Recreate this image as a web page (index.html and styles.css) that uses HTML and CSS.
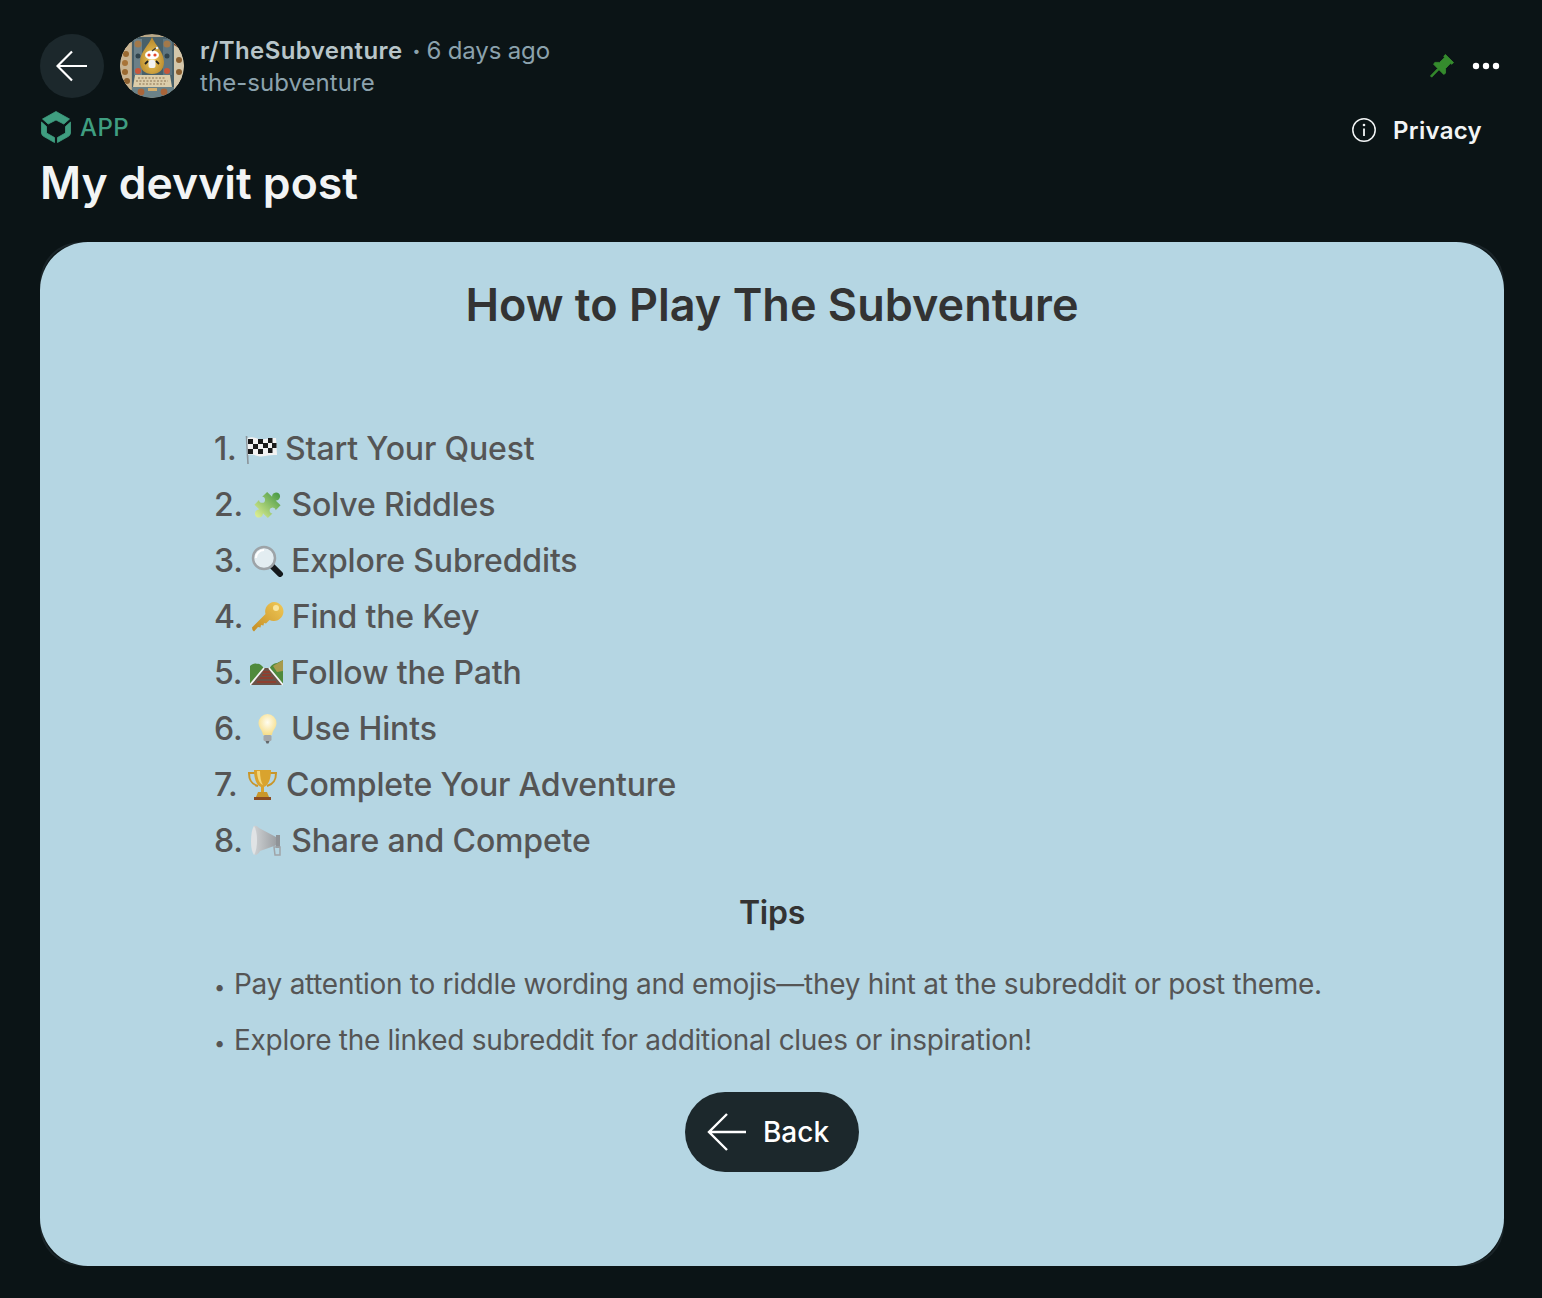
FILE: index.html
```html
<!DOCTYPE html>
<html lang="en">
<head>
<meta charset="utf-8">
<title>My devvit post</title>
<link rel="stylesheet" href="styles.css">
</head>
<body>
<main class="page">
  <header class="top">
    <div class="who">
      <button class="round-back" aria-label="Go back">
        <svg class="arrow" viewBox="0 0 32 32" width="32" height="32"><path d="M31 16H2M16 1.500 1.500 16 16 30.500" fill="none" stroke="#fff" stroke-width="2.200"/></svg>
      </button>
      <svg class="avatar" viewBox="0 0 64 64" width="64" height="64" role="img" aria-label="Subreddit avatar">
        <defs>
          <clipPath id="av"><circle cx="32" cy="32" r="32"/></clipPath>
          <radialGradient id="gold" cx=".5" cy=".6" r=".6"><stop offset="0" stop-color="#f0c95a"/><stop offset="1" stop-color="#b3842a"/></radialGradient>
        </defs>
        <g clip-path="url(#av)">
          <rect width="64" height="64" fill="#b9a888"/>
          <rect x="0" y="0" width="11" height="64" fill="#c9b492"/>
          <rect x="54" y="0" width="10" height="64" fill="#d4c7ab"/>
          <circle cx="6" cy="20" r="3" fill="#9a6a32"/><circle cx="5" cy="29" r="3" fill="#a87438"/><circle cx="5" cy="38" r="3" fill="#9a6a32"/><circle cx="7" cy="47" r="3" fill="#8c6030"/>
          <circle cx="59" cy="26" r="3" fill="#8c6030"/><circle cx="59" cy="38" r="3" fill="#8c6030"/>
          <path d="M54 10 64 16" stroke="#7a3f22" stroke-width="2"/>
          <rect x="12" y="3" width="42" height="60" fill="#48606a"/>
          <rect x="14" y="5" width="8" height="36" fill="#6c8088"/><rect x="43" y="5" width="9" height="36" fill="#5f7680"/>
          <circle cx="18" cy="10" r="3.500" fill="#a3794a"/><circle cx="47" cy="10" r="3.500" fill="#a3794a"/>
          <circle cx="18" cy="22" r="2.500" fill="#30434c"/><circle cx="47" cy="22" r="2.500" fill="#30434c"/>
          <circle cx="18" cy="37" r="3" fill="#c8573a"/><circle cx="47" cy="37" r="3" fill="#c8573a"/>
          <path d="M32 3C29 11 20 18 20 28c0 8 5 12 12 12s12-4 12-12C44 18 35 11 32 3Z" fill="url(#gold)"/>
          <ellipse cx="32" cy="21" rx="7" ry="4.500" fill="#fff"/>
          <circle cx="29" cy="21" r="1.600" fill="#e4472a"/><circle cx="35" cy="21" r="1.600" fill="#e4472a"/>
          <rect x="28.500" y="26" width="7" height="8" rx="2" fill="#f3f3f3"/>
          <path d="M28 27l-3 3M36 27l3 3" stroke="#222" stroke-width="1.800"/>
          <path d="M32 17l4-3" stroke="#333" stroke-width="1.200"/><circle cx="37" cy="14" r="1.300" fill="#eee"/>
          <path d="M15 41h35l2 12H13Z" fill="#dccdaa"/>
          <path d="M18 44h28M16 47h32M19 50h26" stroke="#8a7452" stroke-width="1.200" stroke-dasharray="2 1.500"/>
          <rect x="12" y="53" width="42" height="11" fill="#6b8288"/>
          <circle cx="21" cy="58" r="3.400" fill="#a9653a"/><circle cx="44" cy="58" r="3.400" fill="#a9653a"/>
          <rect x="28" y="54" width="9" height="3" fill="#d4ad6a"/>
        </g>
      </svg>
      <div class="names">
        <div class="line-one"><span class="sub">r/TheSubventure</span><span class="dot">•</span><span class="age">6 days ago</span></div>
        <div class="slug">the-subventure</div>
      </div>
    </div>
    <div class="actions">
      <svg class="pin" viewBox="0 0 24 24" width="24" height="24"><path d="M15.400 0.400 23.600 8.600 21.800 10.200 20.300 9.600 15.600 14.400 15.500 19.200 13.700 20.400 9 15.700 1.700 23.200 0.400 21.900 7.700 14.400 3.600 10.300 4.800 8.400 9.600 8.400 14.400 3.700 13.800 2.200Z" fill="#358b2d" stroke="#358b2d" stroke-width=".8" stroke-linejoin="round"/></svg>
      <svg class="dots" viewBox="0 0 28 8" width="28" height="8"><circle cx="4" cy="4" r="3.200" fill="#fff"/><circle cx="14" cy="4" r="3.200" fill="#fff"/><circle cx="24" cy="4" r="3.200" fill="#fff"/></svg>
    </div>
  </header>

  <section class="meta">
    <div class="meta-left">
      <div class="app">
        <svg viewBox="0 0 30 32" width="30" height="32"><path d="M15 .5 28.500 8 22.800 13 15 9 7.200 13 1.500 8Z M.5 11 5.500 15.500V22L13.500 26.500V31.500L2.500 25.300Q.5 24 .5 22Z M29.500 11 24.500 15.500V22L16.500 26.500V31.500L27.500 25.300Q29.500 24 29.500 22Z" fill="#3f9e80" stroke="#3f9e80" stroke-width=".8" stroke-linejoin="round"/></svg>
        <span>APP</span>
      </div>
      <h1>My devvit post</h1>
    </div>
    <div class="privacy">
      <svg viewBox="0 0 24 24" width="24" height="24"><circle cx="12" cy="12" r="11.200" fill="none" stroke="#f2f4f5" stroke-width="1.500"/><path d="M12 10.500V18" stroke="#f2f4f5" stroke-width="1.800"/><circle cx="12" cy="7" r="1.300" fill="#f2f4f5"/></svg>
      <span>Privacy</span>
    </div>
  </section>

  <article class="frame">
    <div class="card">
      <h2>How to Play The Subventure</h2>
      <div class="content">
        <ol class="steps">
          <li>1. <svg class="emoji" viewBox="0 0 33 32"><path d="M1.500 3 3 31" stroke="#8b949a" stroke-width="1.600"/><path d="M2.500 5C9 2 13 8 20 6c4-1 8-1 11-1l1 17c-4 0-8 0-12 1-7 2-11-3-17-1Z" fill="#f2f2f2"/><g fill="#1b1b1b"><rect x="3" y="6" width="5" height="5"/><rect x="13" y="6" width="5" height="5"/><rect x="23" y="5" width="4.500" height="5"/><rect x="8" y="11" width="5" height="5"/><rect x="18" y="10" width="5" height="5"/><rect x="27" y="10" width="4.500" height="5"/><rect x="3" y="16" width="5" height="5"/><rect x="13" y="16" width="5" height="5"/><rect x="23" y="15" width="4.500" height="5"/></g></svg> Start Your Quest</li>
          <li>2. <svg class="emoji" viewBox="0 0 33 32"><defs><linearGradient id="pz" x1=".5" y1="0" x2=".5" y2="1"><stop offset="0" stop-color="#4a9a46"/><stop offset="1" stop-color="#dcee92"/></linearGradient></defs><path transform="translate(16.500 16) rotate(45) translate(-16.500 -17)" d="M7 8H14a4 4 0 1 1 5 0H26V15a3 3 0 1 0 0 4.500V26H19a4 4 0 1 1-5 0H7V19.500a3 3 0 1 0 0-4.500Z" fill="url(#pz)"/></svg> Solve Riddles</li>
          <li>3. <svg class="emoji" viewBox="0 0 33 32"><path d="M20 20 29 29" stroke="#15191c" stroke-width="6" stroke-linecap="round"/><circle cx="13" cy="13" r="11" fill="#e3edf1" stroke="#9da3a7" stroke-width="2.500"/><path d="M5 13a8 8 0 0 1 8-8" stroke="#fff" stroke-width="2" fill="none"/></svg> Explore Subreddits</li>
          <li>4. <svg class="emoji" viewBox="0 0 33 32"><defs><linearGradient id="ky" x1="1" y1="0" x2="0" y2="1"><stop offset="0" stop-color="#f1c957"/><stop offset="1" stop-color="#c48d24"/></linearGradient></defs><path d="M23 1a9.500 9.500 0 1 1-4.500 17.900L15 22.500l-2-.5-.5 2.500-2.500-.5-.5 2.500-2.500-.5L3 30.500 1.500 29 1 26.500 14.500 13A9.500 9.500 0 0 1 23 1Z" fill="url(#ky)"/><circle cx="25" cy="7" r="3" fill="#f9e6a0"/></svg> Find the Key</li>
          <li>5. <svg class="emoji" viewBox="0 0 33 32"><path d="M0 28V9c2-2 5-3 7-2 2-1 4 1 6 3l2 4h3l3-5c2-2 4-3 6-3l6-3v25Z" fill="#4f8a3c"/><path d="M23 9l10-6v11l-6 1Z" fill="#a79a4b"/><path d="M0 28 14 11h5l14 17Z" fill="#6b5348"/><path d="M0 28 14 11M33 28 19 11" stroke="#f4f4f4" stroke-width="1.800"/><path d="M7 25h19M10 21h13M12 18h9M13 15h7" stroke="#8f3f2f" stroke-width="1.800"/></svg> Follow the Path</li>
          <li>6. <svg class="emoji" viewBox="0 0 33 32"><defs><radialGradient id="bb" cx=".5" cy=".4" r=".6"><stop offset="0" stop-color="#fffdf0"/><stop offset="1" stop-color="#f6de8a"/></radialGradient></defs><path d="M16.500 1a9 9 0 0 1 9 9c0 5-4 7-4.500 12h-9c-.5-5-4.500-7-4.500-12a9 9 0 0 1 9-9Z" fill="url(#bb)"/><rect x="12.500" y="22" width="8" height="6" rx="1.500" fill="#a3a7aa"/><path d="M14.500 28h4l-1 2.500h-2Z" fill="#63676a"/></svg> Use Hints</li>
          <li>7. <svg class="emoji" viewBox="0 0 33 32"><path d="M9 4H3c0 7 2 11 9 13M24 4h6c0 7-2 11-9 13" fill="none" stroke="#c9962a" stroke-width="2"/><path d="M8 1h17c0 8-2 15-7 17v5h-3v-5C10 16 8 9 8 1Z" fill="#d9a32e"/><path d="M11 2h3c0 6 1 11 3 14-4-1-6-8-6-14Z" fill="#f3d67a"/><path d="M12 23h9l2 5H10Z" fill="#c9962a"/><rect x="8" y="28" width="17" height="3" fill="#8a4b22"/></svg> Complete Your Adventure</li>
          <li>8. <svg class="emoji" viewBox="0 0 33 32"><defs><linearGradient id="mg" x1="0" y1="0" x2="1" y2="0"><stop offset="0" stop-color="#d2d5d7"/><stop offset="1" stop-color="#9a9ea2"/></linearGradient></defs><path d="M3 1c2-1 4 1 5 2l17 9 1 8-17 6c-1 2-3 4-5 4-2-3-3-8-3-14S1 4 3 1Z" fill="url(#mg)"/><path d="M3 1c-2 3-3 8-3 15s1 11 3 14c2-3 3-9 3-15S5 4 3 1Z" fill="#e0e3e5"/><rect x="25" y="10" width="4" height="13" fill="#8f9397"/><path d="M23 22h6v8h-5Z" fill="none" stroke="#a0a4a8" stroke-width="1.500"/></svg> Share and Compete</li>
        </ol>
        <h3>Tips</h3>
        <ul class="tips">
          <li><span class="bullet">•</span>Pay attention to riddle wording and emojis—they hint at the subreddit or post theme.</li>
          <li><span class="bullet">•</span>Explore the linked subreddit for additional clues or inspiration!</li>
        </ul>
      </div>
      <button class="back">
        <svg viewBox="0 0 40 38" width="40" height="38"><path d="M39 19H2M20 1 2 19 20 37" fill="none" stroke="#fff" stroke-width="2.400"/></svg>
        <span>Back</span>
      </button>
    </div>
  </article>
</main>
</body>
</html>
```
FILE: styles.css
```css
* { box-sizing: border-box; }
html, body { margin: 0; }
body {
  background: #0b1416;
  font-family: Inter, "Liberation Sans", sans-serif;
  height: 1298px;
  overflow: hidden;
}
.page { padding: 34px 38px 0 40px; }
.top { display: flex; justify-content: space-between; align-items: center; height: 64px; }
.who { display: flex; align-items: center; }
.round-back {
  width: 64px; height: 64px; border-radius: 50%; border: 0; padding: 0;
  background: #1c282c; display: flex; align-items: center; justify-content: center;
  margin-right: 16px;
}
.avatar { display: block; margin-right: 16px; border-radius: 50%; }
.names { display: flex; flex-direction: column; gap: 2px; padding-top: 2px; }
.line-one { display: flex; align-items: center; height: 30px; font-size: 24px; line-height: 30px; }
.sub { font-weight: 600; color: #b8c5c9; letter-spacing: .42px; }
.dot { color: #8ba2ad; font-size: 14px; margin: 0 6px 0 10px; }
.age { color: #8ba2ad; letter-spacing: -.15px; }
.slug { height: 30px; font-size: 24px; line-height: 30px; color: #8ba2ad; letter-spacing: .05px; }
.actions { display: flex; align-items: center; gap: 18px; margin-right: 4px; }
.pin, .dots { display: block; }
.meta { display: flex; justify-content: space-between; align-items: flex-start; margin-top: 12px; }
.meta-left { display: flex; flex-direction: column; }
.app { display: flex; align-items: center; gap: 9px; margin-left: 1px; height: 34px; font-size: 24px; letter-spacing: .4px; font-weight: 500; color: #3f9e80; }
h1 { margin: 12px 0 0; font-size: 44.500px; line-height: 54px; font-weight: 600; color: #f2f4f5; }
.privacy { display: flex; align-items: center; gap: 17px; margin: 2px 22px 0 0; color: #f2f4f5; font-size: 24px; font-weight: 600; letter-spacing: .3px; height: 36px; }
.frame { margin-top: 32px; height: 1024px; border-radius: 40px; box-shadow: inset 0 0 0 2px #1a2428; }
.card {
  height: 1024px; border-radius: 48px; background: #b5d6e3;
  display: flex; flex-direction: column; align-items: center; padding-top: 34px;
}
h2 { margin: 0; font-size: 45px; line-height: 58px; font-weight: 600; color: #333; }
.content { width: 1116px; margin-top: 87px; }
.steps { list-style: none; margin: 0; padding: 0; }
.steps li { height: 56px; font-size: 32px; line-height: 56px; font-weight: 500; color: #555; white-space: nowrap; letter-spacing: -.16px; }
.emoji { width: 33px; height: 32px; vertical-align: -5px; margin-right: -1px; }
h3 { margin: 16px 0 0; text-align: center; font-size: 32px; line-height: 56px; font-weight: 600; color: #333; letter-spacing: -.2px; }
.tips { list-style: none; margin: 15px 0 0; padding: 0; }
.tips li { height: 56px; font-size: 28px; line-height: 56px; color: #555; white-space: nowrap; letter-spacing: -.29px; }
.bullet { display: inline-block; width: 20px; font-size: 20px; }
.back {
  margin-top: 24px; width: 174px; height: 80px; border: 0; border-radius: 40px; padding: 0 8px 0 0;
  background: #1c282c; color: #fff; font: 500 28px Inter, "Liberation Sans", sans-serif;
  display: flex; align-items: center; justify-content: center; gap: 16px;
}
```
